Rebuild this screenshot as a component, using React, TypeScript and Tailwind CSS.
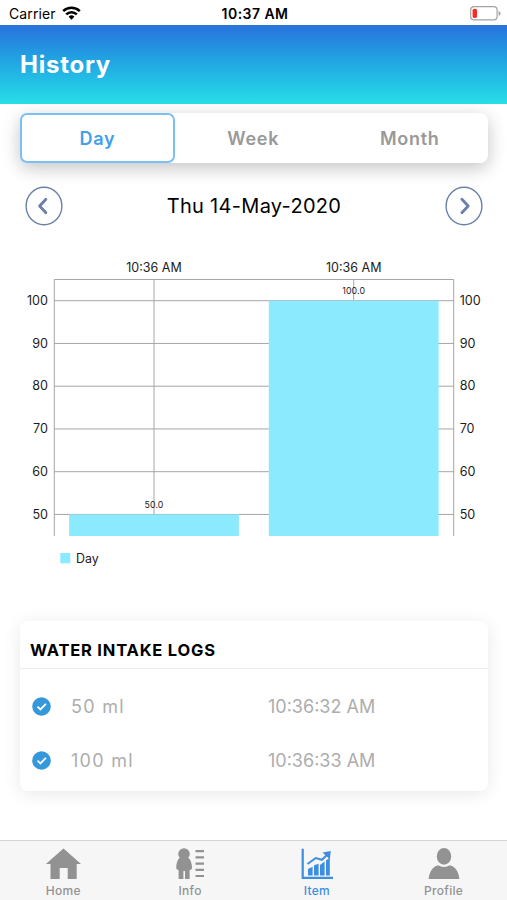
import { useState } from 'react';
import type { ReactNode } from 'react';

interface LogEntry {
  amount: string;
  time: string;
}

interface ChartBar {
  x: number;
  value: number;
  label: string;
}

const logs: LogEntry[] = [
  { amount: '50 ml', time: '10:36:32 AM' },
  { amount: '100 ml', time: '10:36:33 AM' },
];

const bars: ChartBar[] = [
  { x: 154, value: 50, label: '10:36 AM' },
  { x: 353.7, value: 100, label: '10:36 AM' },
];

const ticks = [100, 90, 80, 70, 60, 50];

// 10 units take 42.75px
const toY = (value: number) => 50.7 + (100 - value) * 4.275;

function StatusBar() {
  return (
    <div className="h-[25px] flex items-center justify-between pl-[9px] pr-1.5 text-black">
      <div className="flex-1 flex items-center gap-1.5 text-[14px] tracking-[0.1px] pt-0.5">
        Carrier
        <svg className="w-[19px] h-[14px] -mt-0.5" viewBox="0 0 19 14" fill="none" stroke="currentColor" strokeWidth="2.5">
          <path d="M1.2 5.1a11.8 11.8 0 0 1 16.6 0" />
          <path d="M4.2 8.4a7.5 7.5 0 0 1 10.6 0" />
          <path d="M9.5 13.7l-2.9-3a4.1 4.1 0 0 1 5.8 0z" fill="currentColor" stroke="none" />
        </svg>
      </div>
      <div className="text-[14px] font-semibold tracking-[0.45px] pt-0.5">10:37 AM</div>
      <div className="flex-1 flex justify-end">
        <svg className="w-[31px] h-[15px] mt-px" viewBox="0 0 31 15" fill="none">
          <rect x="0.7" y="0.7" width="26.4" height="13.2" rx="3.4" stroke="#a3a3a3" strokeWidth="1.2" />
          <rect x="2.6" y="2.7" width="4.4" height="9.2" rx="1.6" fill="#fb2a25" />
          <path d="M28.6 5v4.8q2-.7 2-2.4t-2-2.4z" fill="#a3a3a3" />
        </svg>
      </div>
    </div>
  );
}

function RoundButton({ direction, onClick }: { direction: 'left' | 'right'; onClick?: () => void }) {
  return (
    <button type="button" onClick={onClick} className="w-[38px] h-10">
      <svg className="w-[38px] h-10" viewBox="0 0 38 40" fill="none" stroke="#6b80a8">
        <ellipse cx="19" cy="20" rx="17.9" ry="18.8" strokeWidth="1.4" />
        <path d={direction === 'left' ? 'M20.9 13.3L14.6 20l6.3 6.7' : 'M16.9 13.3l6.3 6.7-6.3 6.7'} strokeWidth="2.8" strokeLinecap="round" strokeLinejoin="round" />
      </svg>
    </button>
  );
}

function IntakeChart() {
  return (
    <svg className="block w-full h-[330px]" viewBox="0 0 507 330" fontFamily="Inter, sans-serif" fill="#1c1c1c">
      <g stroke="#a6a6a6" strokeWidth="1">
        <path d="M54.3 286V29.5H453.7V286" fill="none" />
        {ticks.map((tick) => (
          <path key={tick} d={`M54 ${toY(tick)}H454`} />
        ))}
        {bars.map((bar) => (
          <path key={bar.x} d={`M${bar.x} 29.5V${toY(bar.value)}`} />
        ))}
      </g>
      {ticks.map((tick) => (
        <g key={tick} fontSize="12.6">
          <text x="48" y={toY(tick) + 4.1} textAnchor="end">{tick}</text>
          <text x="459.7" y={toY(tick) + 4.1}>{tick}</text>
        </g>
      ))}
      {bars.map((bar) => (
        <g key={bar.x} textAnchor="middle">
          <rect x={bar.x - 84.9} y={toY(bar.value)} width="169.8" height={286 - toY(bar.value)} fill="#8ceaff" />
          <text x={bar.x} y="22" fontSize="12.5">{bar.label}</text>
          <text x={bar.x} y={toY(bar.value) - 6.5} fontSize="8.8" letterSpacing="0.1">{bar.value.toFixed(1)}</text>
        </g>
      ))}
      <rect x="60.3" y="303" width="10" height="10.3" fill="#8ceaff" />
      <text x="76" y="313" fontSize="12.4">Day</text>
    </svg>
  );
}

function TabItem({ label, active, children }: { label: string; active?: boolean; children: ReactNode }) {
  return (
    <button type="button" className={`flex-1 flex flex-col items-center pt-1.5 ${active ? 'text-[#3d8edf]' : 'text-[#929292]'}`}>
      <svg className="w-9 h-[34px]" viewBox="0 0 36 34" fill="currentColor">
        {children}
      </svg>
      <span className="text-[12px] leading-[15px] tracking-[0.3px] mt-0.5 font-medium">{label}</span>
    </button>
  );
}

export default function App() {
  const [range, setRange] = useState('Day');

  return (
    <div className="w-[507px] h-[900px] bg-white flex flex-col overflow-hidden font-[Inter,sans-serif]">
      <StatusBar />
      <header className="h-[79px] bg-gradient-to-b from-[#2872dc] to-[#28dfe6] flex items-center pl-5">
        <h1 className="text-white text-[24px] font-bold tracking-[0.75px]">History</h1>
      </header>

      <main className="flex-1 flex flex-col">
        <div className="mt-[9px] ml-5 mr-[19px] h-[50px] flex bg-white rounded-lg shadow-[0_5px_18px_rgba(0,0,0,0.24)]">
          {['Day', 'Week', 'Month'].map((item) => (
            <button
              key={item}
              type="button"
              onClick={() => setRange(item)}
              className={`flex-1 first:flex-none first:w-[155px] rounded-[7px] border-2 text-[18px] font-semibold tracking-[0.75px] ${
                range === item ? 'border-[#7cc0f3] text-[#429fe9]' : 'border-transparent text-[#999]'
              }`}
            >
              {item}
            </button>
          ))}
        </div>

        <div className="mt-[23px] pl-[25px] pr-6 flex items-center justify-between">
          <RoundButton direction="left" />
          <span className="text-[20px] tracking-[0.3px] text-black">Thu 14-May-2020</span>
          <RoundButton direction="right" />
        </div>

        <div className="mt-6">
          <IntakeChart />
        </div>

        <section className="mt-[41px] ml-5 mr-[19px] h-[170px] bg-white rounded-lg shadow-[0_3px_18px_rgba(0,0,0,0.09)]">
          <h2 className="h-[48px] pt-[11px] pl-2.5 flex items-center border-b border-[#ebebeb] text-[16.5px] font-bold tracking-[0.8px] text-black">
            WATER INTAKE LOGS
          </h2>
          <div className="pt-2.5">
            {logs.map((log) => (
              <div key={log.time} className="h-[54px] flex items-center pl-3 text-[18px] text-[#adadad]">
                <svg className="w-[19px] h-[19px]" viewBox="0 0 19 19" fill="none">
                  <circle cx="9.5" cy="9.5" r="9.3" fill="#3498db" />
                  <path d="M5.5 9.6l2.9 2.8 5.5-5.6" stroke="#fff" strokeWidth="1.9" />
                </svg>
                <span className="ml-5 w-[197px] tracking-[1.3px]">{log.amount}</span>
                <span>{log.time}</span>
              </div>
            ))}
          </div>
        </section>
      </main>

      <nav className="h-[60px] bg-[#f7f6f7] border-t border-[#d4d4d4] flex">
        <TabItem label="Home">
          <path d="M18.5 1.5L36 17h-4.300v15H22.700V21h-8v11H5.500V17H.9z" />
        </TabItem>
        <TabItem label="Info">
          <circle cx="12" cy="7" r="5.8" />
          <path d="M8 10.500h8q3.600 2.500 4 9.800.1 2.700-2.400 2.700V32h-4.600v-8h-1.600v8H6.600v-9q-2.500 0-2.400-2.700.4-7.300 3.800-9.800z" />
          <path d="M23.500 4.200h8.500M23.500 10.400h8.500M23.500 16.600h8.500M23.500 22.800h8.500M23.500 29h8.500" stroke="currentColor" strokeWidth="2.200" />
        </TabItem>
        <TabItem label="Item" active>
          <path d="M3.700 1.700V30.900H34" fill="none" stroke="currentColor" strokeWidth="2.200" />
          <path d="M9 22l4.600-2.300V28.500H9zM15 18.300l4.600-1.600v11.800H15zM21 18l4.600-3.500v14H21zM27 13.500l3.800-3v18H27z" />
          <path d="M8.500 17l8.200-6 6.200 1.800L29 7" fill="none" stroke="currentColor" strokeWidth="2" />
          <path d="M23.500 5.400L31.800 4l-1 8.200z" />
        </TabItem>
        <TabItem label="Profile">
          <ellipse cx="18" cy="9.400" rx="7.200" ry="8.400" />
          <path d="M12 18.200q6 3.600 12 0 6.500 1.900 8.600 9.300l.8 4.500H2.600l.8-4.500q2.100-7.400 8.600-9.300z" />
        </TabItem>
      </nav>
    </div>
  );
}
